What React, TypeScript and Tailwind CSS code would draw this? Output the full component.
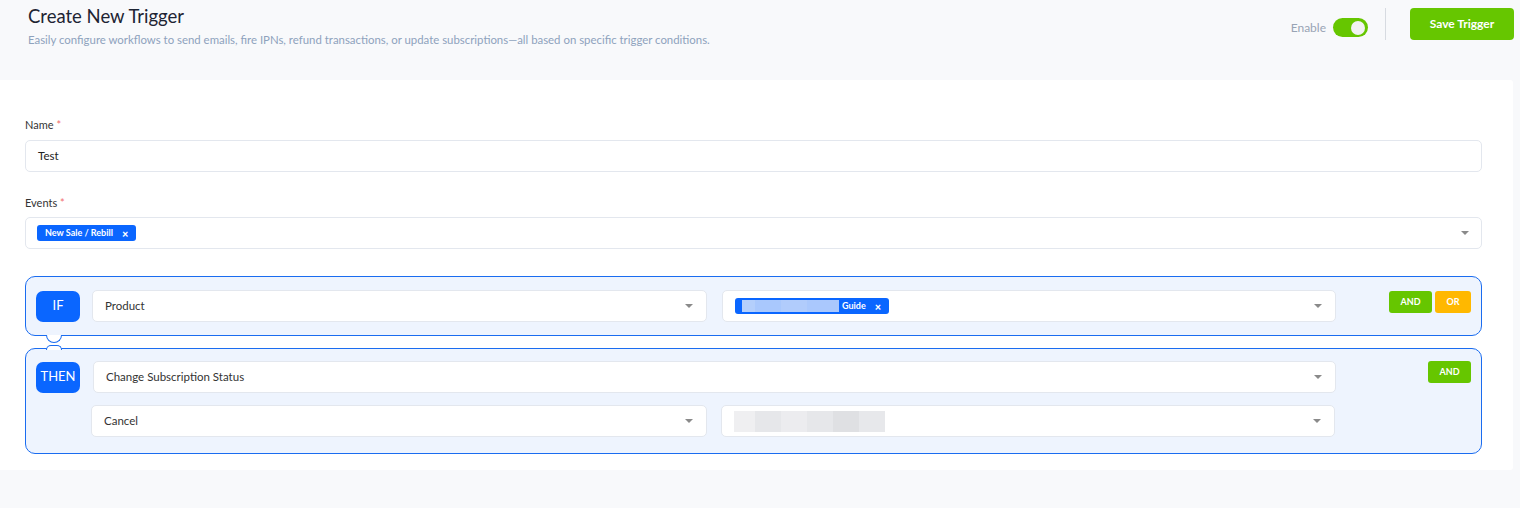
import React from "react";

const font = { fontFamily: "Lato, 'Noto Sans', sans-serif" };

function Caret() {
  return (
    <svg width="10" height="6" viewBox="0 0 10 6" className="shrink-0">
      <path d="M1 1 L9 1 L5 5 Z" fill="#8a8a8a" />
    </svg>
  );
}

function SelectBox({
  children,
  className = "",
}: {
  children?: React.ReactNode;
  className?: string;
}) {
  return (
    <div
      className={`flex h-[32px] items-center justify-between rounded-[5px] border border-[#e3e7ee] bg-white pl-[12px] pr-[12px] ${className}`}
    >
      <div className="flex items-center text-[11.5px] text-[#333]">{children}</div>
      <Caret />
    </div>
  );
}

function Tag({ children }: { children: React.ReactNode }) {
  return (
    <span className="flex h-[16px] items-center gap-[9px] rounded-[3px] bg-[#0a66ff] px-[8px] text-[9px] font-bold text-white">
      {children}
      <span className="text-[11px] font-black leading-none">×</span>
    </span>
  );
}

function Badge({ label }: { label: string }) {
  return (
    <div className="flex h-[31px] w-[44px] shrink-0 items-center justify-center rounded-[7px] bg-[#0a66ff] text-[13px] text-white">
      {label}
    </div>
  );
}

function Pill({ label, color, w }: { label: string; color: string; w: string }) {
  return (
    <div
      className={`flex h-[22px] items-center justify-center rounded-[3px] text-[9px] font-bold text-white ${color} ${w}`}
    >
      {label}
    </div>
  );
}

export default function App() {
  return (
    <div className="min-h-[508px] w-[1520px] bg-[#f8f9fb]" style={font}>
      {/* page header */}
      <div className="flex h-[80px] items-start justify-between pl-[28px] pr-[6px]">
        <div className="pt-[5px]">
          <h1 className="text-[18.5px] leading-[22px] text-[#1d2433]">Create New Trigger</h1>
          <p className="mt-[4px] text-[11.4px] text-[#8ea2bd]">
            Easily configure workflows to send emails, fire IPNs, refund transactions, or update
            subscriptions—all based on specific trigger conditions.
          </p>
        </div>
        <div className="flex items-start pt-[8px]">
          <div className="mt-[10px] flex items-center">
            <span className="mr-[7px] text-[12px] text-[#98a4b5]">Enable</span>
            <div className="flex h-[19px] w-[35px] items-center justify-end rounded-full bg-[#66c600] pr-[3px]">
              <div className="h-[14px] w-[14px] rounded-full bg-[#f2f2f2]" />
            </div>
          </div>
          <div className="ml-[17px] mr-[24px] h-[32px] w-px bg-[#d7dbe1]" />
          <button className="flex h-[32px] w-[104px] items-center justify-center rounded-[4px] bg-[#66c600] text-[12px] font-bold text-white">
            Save Trigger
          </button>
        </div>
      </div>

      {/* form card */}
      <div className="w-[1513px] rounded-r-[3px] bg-white pb-[16px] pl-[25px] pr-[31px] pt-[37px]">
        <label className="block text-[11px] text-[#333]">
          Name <span className="text-[#f26d6d]">*</span>
        </label>
        <div className="mt-[6px] flex h-[32px] items-center rounded-[5px] border border-[#e3e7ee] pl-[12px] text-[11.5px] text-[#222]">
          Test
        </div>

        <label className="mt-[23px] block text-[11px] text-[#333]">
          Events <span className="text-[#f26d6d]">*</span>
        </label>
        <div className="mt-[6px] flex h-[32px] items-center justify-between rounded-[5px] border border-[#e3e7ee] pl-[11px] pr-[11px]">
          <Tag>New Sale / Rebill</Tag>
          <Caret />
        </div>

        {/* IF block */}
        <div className="relative mt-[27px] flex h-[60px] items-center rounded-[10px] border border-[#1a6cf0] bg-[#eef4fe] pl-[10px] pr-[10px]">
          <Badge label="IF" />
          <SelectBox className="ml-[12px] w-[615px]">Product</SelectBox>
          <SelectBox className="ml-[15px] w-[614px]">
            <span className="flex h-[16px] items-center rounded-[3px] bg-[#0a66ff] pl-[7px] pr-[8px] text-[9px] font-bold text-white">
              <span className="flex h-[12px]">
                <span className="w-[13px] bg-[#b4cffc]" />
                <span className="w-[26px] bg-[#a9c8fd]" />
                <span className="w-[26px] bg-[#b1ccfc]" />
                <span className="w-[32px] bg-[#aac8fd]" />
              </span>
              <span className="ml-[3px]">Guide</span>
              <span className="ml-[9px] text-[11px] font-black leading-none">×</span>
            </span>
          </SelectBox>
          <div className="ml-auto flex gap-[3px] self-start pt-[14px]">
            <Pill label="AND" color="bg-[#66c600]" w="w-[43px]" />
            <Pill label="OR" color="bg-[#ffb800]" w="w-[36px]" />
          </div>
          {/* connector knob hanging below the IF block */}
          <div className="absolute bottom-[-8px] left-[20px] h-[8px] w-[16px] rounded-b-full border border-t-0 border-[#1a6cf0] bg-white" />
        </div>

        {/* THEN block */}
        <div className="relative mt-[12px] flex rounded-[10px] border border-[#1a6cf0] bg-[#eef4fe] pb-[16px] pl-[10px] pr-[10px] pt-[12px]">
          {/* connector cap on top of the THEN block */}
          <div className="absolute left-[20px] top-[-4px] h-[5px] w-[16px] rounded-t-[8px] border border-b-0 border-[#1a6cf0] bg-white" />
          <div className="flex flex-col">
            <div className="flex items-center">
              <Badge label="THEN" />
              <SelectBox className="ml-[13px] w-[1243px]">Change Subscription Status</SelectBox>
            </div>
            <div className="mt-[12px] flex">
              <SelectBox className="ml-[55px] w-[616px]">Cancel</SelectBox>
              <SelectBox className="ml-[14px] w-[614px]">
                <span className="flex h-[21px]">
                  <span className="w-[21px] bg-[#efeff1]" />
                  <span className="w-[26px] bg-[#e6e7ea]" />
                  <span className="w-[26px] bg-[#ececef]" />
                  <span className="w-[26px] bg-[#e6e7ea]" />
                  <span className="w-[26px] bg-[#dfe0e3]" />
                  <span className="w-[26px] bg-[#e7e8eb]" />
                </span>
              </SelectBox>
            </div>
          </div>
          <div className="ml-auto flex">
            <Pill label="AND" color="bg-[#66c600]" w="w-[43px]" />
          </div>
        </div>
      </div>
    </div>
  );
}
